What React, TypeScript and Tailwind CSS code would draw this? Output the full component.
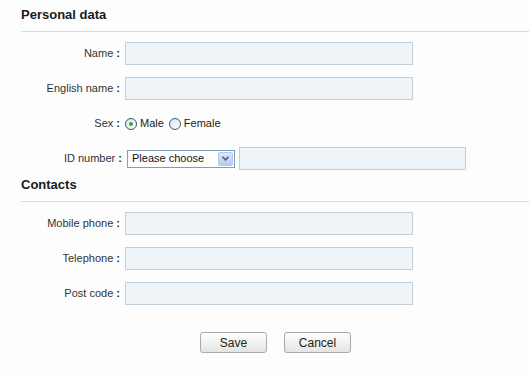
const Label = ({ text, w = 'w-[125px]' }: { text: string; w?: string }) => (
  <span className={`${w} shrink-0 pr-[5px] text-right text-[11px] text-[#333]`}>
    {text} <b className="font-bold text-[#222]">:</b>
  </span>
)

const TextInput = ({ w = 'w-[288px]' }: { w?: string }) => (
  <input
    type="text"
    className={`${w} h-[23px] border border-[#c3cfd8] bg-[#eff4f9] outline-none`}
  />
)

const Row = ({ label }: { label: string }) => (
  <div className="flex h-[23px] items-center">
    <Label text={label} />
    <TextInput />
  </div>
)

const Heading = ({ title }: { title: string }) => (
  <div className="ml-[21px] flex h-[32px] items-center border-b border-[#d9dde0] pb-[2px]">
    <h2 className="text-[13px] font-bold text-[#1a1a1a]">{title}</h2>
  </div>
)

const Radio = ({ checked, label }: { checked?: boolean; label: string }) => (
  <label className="mr-[5px] flex items-center gap-[3px]">
    <span className="flex h-[12px] w-[12px] items-center justify-center rounded-full border border-[#2a5a85] bg-gradient-to-br from-[#dfe3e8] to-white">
      {checked && <span className="h-[4px] w-[4px] rounded-full bg-[#22b422]" />}
    </span>
    <span className="text-[11px] text-[#222]">{label}</span>
  </label>
)

const Button = ({ children }: { children: string }) => (
  <button className="h-[21px] w-[67px] rounded-[3px] border border-[#a9a9a9] bg-gradient-to-b from-white to-[#e4e4e4] text-[12px] text-[#222]">
    {children}
  </button>
)

export default function App() {
  return (
    <div className="h-[377px] w-[529px] bg-[#fdfdfd] font-['Liberation_Sans',Arial,sans-serif]">
      <Heading title="Personal data" />
      <div className="flex flex-col gap-[12px] pt-[10px]">
        <Row label="Name" />
        <Row label="English name" />
        <div className="flex h-[23px] items-center">
          <Label text="Sex" />
          <Radio checked label="Male" />
          <Radio label="Female" />
        </div>
        <div className="flex h-[23px] items-center">
          <Label text="ID number" w="w-[127px]" />
          <div className="flex h-[18px] w-[108px] items-center border border-[#7f9db9] bg-white">
            <span className="flex-1 pl-[4px] text-[11px] text-[#111]">Please choose</span>
            <span className="mr-[1px] flex h-[14px] w-[15px] items-center justify-center rounded-[2px] border border-[#b6c6ea] bg-gradient-to-b from-[#dbe5fb] to-[#b7cbf5]">
              <svg width="7" height="5" viewBox="0 0 7 5">
                <path d="M0.5 0.8 L3.5 3.8 L6.5 0.8" fill="none" stroke="#4d6185" strokeWidth="1.6" />
              </svg>
            </span>
          </div>
          <span className="ml-[4px]">
            <TextInput w="w-[227px]" />
          </span>
        </div>
      </div>
      <Heading title="Contacts" />
      <div className="flex flex-col gap-[12px] pt-[10px]">
        <Row label="Mobile phone" />
        <Row label="Telephone" />
        <Row label="Post code" />
      </div>
      <div className="ml-[200px] mt-[27px] flex gap-[17px]">
        <Button>Save</Button>
        <Button>Cancel</Button>
      </div>
    </div>
  )
}
